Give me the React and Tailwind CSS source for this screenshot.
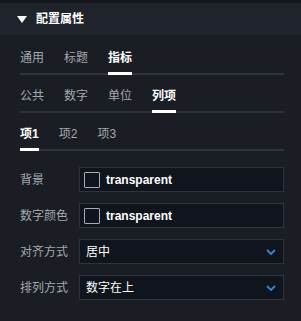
import React from "react";

const FONT = { fontFamily: '"Liberation Sans", "Noto Sans CJK SC", sans-serif' };

function TabRow({ items, active, className = "" }) {
  return (
    <div className={`flex gap-5 border-b-2 border-[#2e333d] ${className}`}>
      {items.map((t) => (
        <div
          key={t}
          className={`relative pb-[7px] text-[12px] leading-4 ${
            t === active ? "text-white font-bold" : "text-[#a4a8b0]"
          }`}
        >
          {t}
          {t === active && (
            <span className="absolute left-0 right-0 bottom-[-2px] h-[3px] bg-white" />
          )}
        </div>
      ))}
    </div>
  );
}

function Chevron() {
  return (
    <svg width="10" height="6" viewBox="0 0 10 6" fill="none">
      <path d="M1 1 L5 5 L9 1" stroke="#2f88dc" strokeWidth="1.8" />
    </svg>
  );
}

function ColorRow({ label }) {
  return (
    <div className="flex items-center">
      <div className="w-[59px] text-[12px] text-[#a4a8b0]">{label}</div>
      <div className="flex h-[25px] w-[205px] items-center border border-[#2e333d] bg-[#10141c] pl-[4px]">
        <div className="h-4 w-4 rounded-[1px] border-[1.5px] border-[#a7aab0]" />
        <span className="ml-[6px] text-[12px] font-bold text-white">transparent</span>
      </div>
    </div>
  );
}

function SelectRow({ label, value }) {
  return (
    <div className="flex items-center">
      <div className="w-[59px] text-[12px] text-[#a4a8b0]">{label}</div>
      <div className="flex h-[25px] w-[205px] items-center justify-between border border-[#2e333d] bg-[#10141c] pl-[6px] pr-[7px]">
        <span className="text-[12px] text-white">{value}</span>
        <Chevron />
      </div>
    </div>
  );
}

export default function App() {
  return (
    <div className="h-[321px] w-[301px] bg-[#1a1d24] overflow-hidden" style={FONT}>
      <div className="flex h-[35px] items-center border-t-[3px] border-[#15171c] bg-[#1f232b] pl-[17px]">
        <svg width="10" height="7" viewBox="0 0 10 7">
          <path d="M0 0 H10 L5 7 Z" fill="#ffffff" />
        </svg>
        <span className="ml-[9px] text-[12px] font-bold text-white">配置属性</span>
      </div>
      <div className="pl-5 pr-[17px]">
        <TabRow className="mt-[15px]" items={["通用", "标题", "指标"]} active="指标" />
        <TabRow className="mt-[13px]" items={["公共", "数字", "单位", "列项"]} active="列项" />
        <TabRow className="mt-[13px]" items={["项1", "项2", "项3"]} active="项1" />
        <div className="mt-4 flex flex-col gap-[11px]">
          <ColorRow label="背景" />
          <ColorRow label="数字颜色" />
          <SelectRow label="对齐方式" value="居中" />
          <SelectRow label="排列方式" value="数字在上" />
        </div>
      </div>
    </div>
  );
}
